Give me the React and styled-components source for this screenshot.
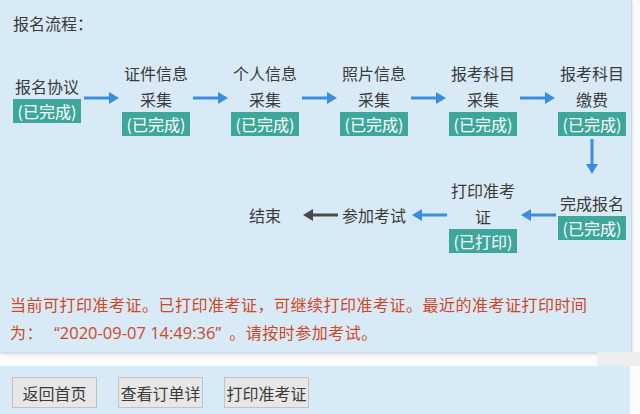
import React from "react";
import styled, { createGlobalStyle } from "styled-components";

const GlobalStyle = createGlobalStyle`
  html, body {
    margin: 0;
    padding: 0;
    background: #fbfbfb;
    font-family: "Noto Sans CJK SC", "Noto Sans", sans-serif;
    color: #3a3a3a;
  }
`;

const Page = styled.div`
  width: 640px;
  height: 414px;
  overflow: hidden;
  display: flex;
  flex-direction: column;
`;

const FlowPanel = styled.section`
  width: 632px;
  height: 352px;
  box-sizing: border-box;
  background: #d8eaf6;
  border-right: 1px solid #c9d8e2;
  box-shadow: 0 2px 3px rgba(120, 140, 160, 0.35);
  padding: 10px 0 0 0;
  display: flex;
  flex-direction: column;
`;

const Title = styled.div`
  font-size: 16px;
  line-height: 26px;
  padding-left: 13px;
`;

const FlowGrid = styled.div`
  display: grid;
  grid-template-columns: 72px repeat(5, 37px 72px);
  grid-template-rows: 80px 37px 80px;
  align-items: center;
  justify-items: center;
  margin: 22px 0 0 11px;
`;

const Step = styled.div`
  grid-column: ${(p) => p.col};
  grid-row: ${(p) => p.row};
  display: flex;
  flex-direction: column;
  align-items: center;
  font-size: 16px;
  line-height: 26px;
  text-align: center;
  white-space: nowrap;
`;

const Badge = styled.span`
  display: block;
  background: #3da79b;
  color: #ffffff;
  font-size: 16px;
  line-height: 24px;
  padding: 0 5px;
`;

const ArrowCell = styled.div`
  grid-column: ${(p) => p.col};
  grid-row: ${(p) => p.row};
  display: flex;
  align-items: center;
  justify-content: center;
  width: 100%;
  height: 100%;
`;

const Message = styled.p`
  margin: 37px 0 0 0;
  padding: 0 10px;
  font-family: "Open Sans", "Noto Sans CJK SC", sans-serif;
  font-size: 16px;
  letter-spacing: 0.5px;
  line-height: 27px;
  color: #cf4727;
  white-space: nowrap;
`;

const Time = styled.span`
  margin: 0 8px 0 11px;
  font-size: 16.5px;
  letter-spacing: 0;
`;

const Gap = styled.div`
  height: 14px;
  display: flex;
`;

const GapRight = styled.div`
  margin-left: auto;
  width: 43px;
  background: #eeeeee;
`;

const ActionBar = styled.div`
  width: 630px;
  flex: 1;
  background: #d8eaf6;
  display: flex;
  align-items: flex-start;
  gap: 21px;
  padding: 11px 0 0 12px;
  box-sizing: border-box;
`;

const ActionButton = styled.button`
  width: 85px;
  height: 31px;
  box-sizing: border-box;
  padding: 0 1px;
  text-align: center;
  background: #e7e7e7;
  border: 1px solid #c2c2c2;
  border-radius: 0;
  font-family: "Noto Sans CJK SC", "Noto Sans", sans-serif;
  font-size: 16px;
  color: #3a3a3a;
  white-space: nowrap;
`;

const Arrow = ({ dir = "right", dark }) => {
  const color = dark ? "#4a4a4a" : "#3a8de0";
  if (dir === "down") {
    return (
      <svg width="12" height="36" viewBox="0 0 12 36">
        <rect x="4.5" y="0" width="3" height="26" fill={color} />
        <polygon points="0,25 12,25 6,35" fill={color} />
      </svg>
    );
  }
  const flip = dir === "left" ? "scale(-1,1) translate(-36,0)" : undefined;
  return (
    <svg width="36" height="12" viewBox="0 0 36 12">
      <g transform={flip}>
        <rect x="0" y="4.5" width="26" height="3" fill={color} />
        <polygon points="25,0 35,6 25,12" fill={color} />
      </g>
    </svg>
  );
};

const topSteps = [
  { lines: ["报名协议"] },
  { lines: ["证件信息", "采集"] },
  { lines: ["个人信息", "采集"] },
  { lines: ["照片信息", "采集"] },
  { lines: ["报考科目", "采集"] },
  { lines: ["报考科目", "缴费"] },
];

export default function App() {
  return (
    <>
      <GlobalStyle />
      <Page>
        <FlowPanel>
          <Title>报名流程：</Title>
          <FlowGrid>
            {topSteps.map((s, i) => (
              <React.Fragment key={i}>
                {i > 0 && (
                  <ArrowCell col={i * 2} row={1}>
                    <Arrow />
                  </ArrowCell>
                )}
                <Step col={i * 2 + 1} row={1}>
                  {s.lines.map((l) => (
                    <span key={l}>{l}</span>
                  ))}
                  <Badge>(已完成)</Badge>
                </Step>
              </React.Fragment>
            ))}

            <ArrowCell col={11} row={2}>
              <Arrow dir="down" />
            </ArrowCell>

            <Step col={11} row={3}>
              <span>完成报名</span>
              <Badge>(已完成)</Badge>
            </Step>
            <ArrowCell col={10} row={3}>
              <Arrow dir="left" />
            </ArrowCell>
            <Step col={9} row={3}>
              <span>打印准考</span>
              <span>证</span>
              <Badge>(已打印)</Badge>
            </Step>
            <ArrowCell col={8} row={3}>
              <Arrow dir="left" />
            </ArrowCell>
            <Step col={7} row={3}>
              <span>参加考试</span>
            </Step>
            <ArrowCell col={6} row={3}>
              <Arrow dir="left" dark />
            </ArrowCell>
            <Step col={5} row={3}>
              <span>结束</span>
            </Step>
          </FlowGrid>
          <Message>
            当前可打印准考证。已打印准考证，可继续打印准考证。最近的准考证打印时间
            <br />
            为：<Time>“2020-09-07 14:49:36”</Time>。请按时参加考试。
          </Message>
        </FlowPanel>
        <Gap>
          <GapRight />
        </Gap>
        <ActionBar>
          <ActionButton>返回首页</ActionButton>
          <ActionButton>查看订单详</ActionButton>
          <ActionButton>打印准考证</ActionButton>
        </ActionBar>
      </Page>
    </>
  );
}
